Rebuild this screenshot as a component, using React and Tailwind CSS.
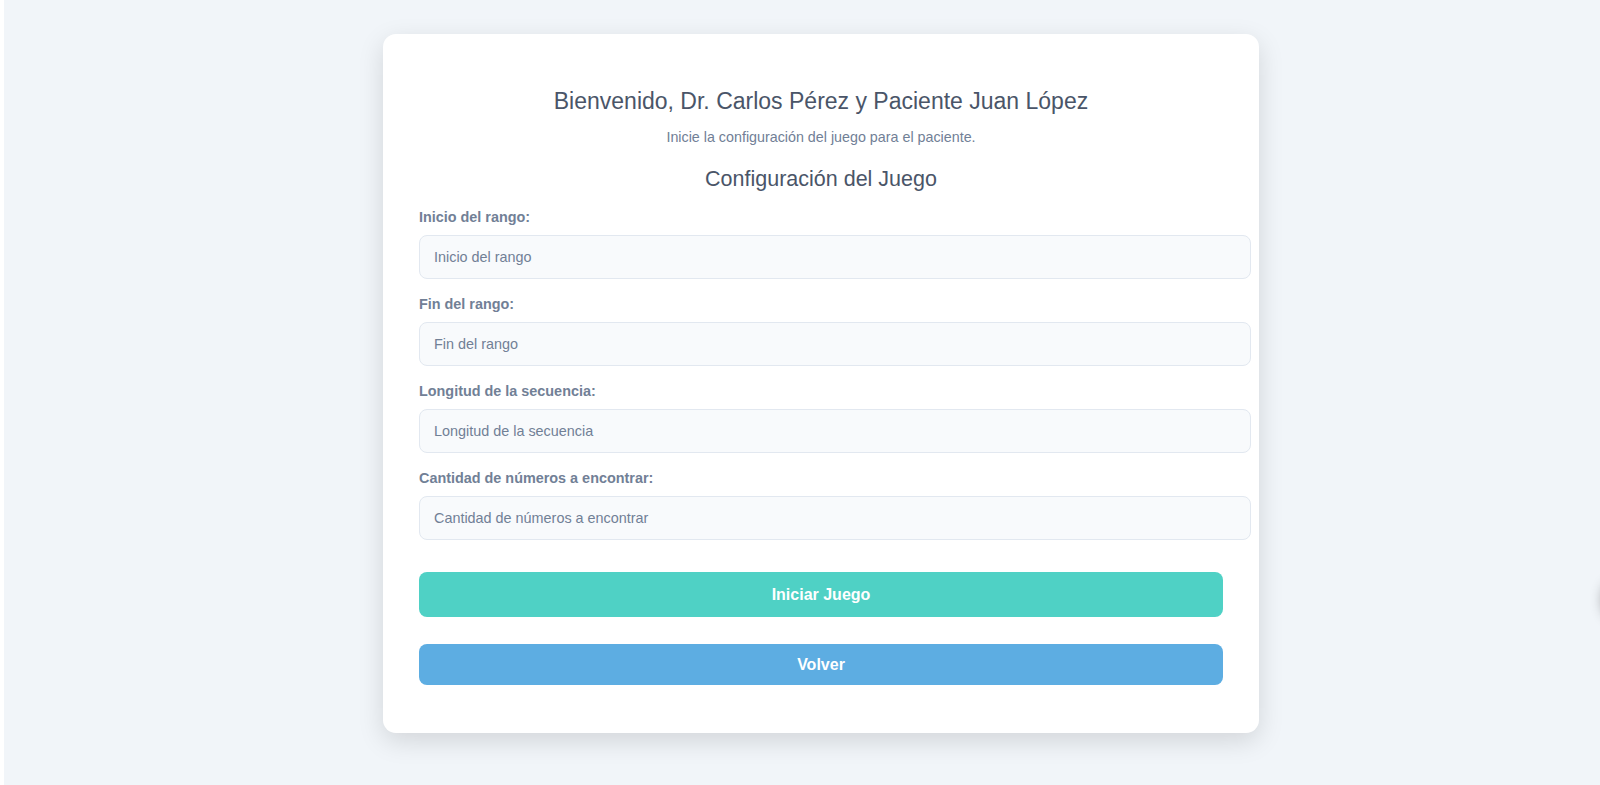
import React from "react";

const fields = [
  "Inicio del rango",
  "Fin del rango",
  "Longitud de la secuencia",
  "Cantidad de números a encontrar",
];

export default function App() {
  return (
    <div
      className="flex h-[785px] w-full overflow-hidden bg-white"
      style={{ fontFamily: '"Liberation Sans", Arial, sans-serif' }}
    >
      <div className="w-[4px] shrink-0 bg-white" />
      <div className="flex flex-1 justify-start bg-[#f1f5f9] pt-[34px] pl-[379px]">
        <div className="h-[699px] w-[876px] rounded-[13px] bg-white px-[36px] pt-[53px] shadow-[0_8px_26px_rgba(0,0,0,0.13)]">
          <h1 className="text-center text-[23px] font-normal leading-[28px] text-[#4a5568]">
            Bienvenido, Dr. Carlos Pérez y Paciente Juan López
          </h1>
          <p className="mt-[12px] text-center text-[14.3px] leading-[20px] text-[#718096]">
            Inicie la configuración del juego para el paciente.
          </p>
          <h2 className="mt-[20px] text-center text-[21.5px] font-normal leading-[24px] text-[#4a5568]">
            Configuración del Juego
          </h2>
          <div className="mt-[16px] flex flex-col gap-[15px]">
            {fields.map((f) => (
              <div key={f} className="flex flex-col">
                <label className="text-[14.4px] font-bold leading-[20px] text-[#718096]">
                  {f}:
                </label>
                <input
                  type="text"
                  placeholder={f}
                  className="mt-[8px] h-[44px] w-[832px] rounded-[8px] border border-[#e2e8f0] bg-[#f8fafc] px-[14px] text-[14.4px] text-[#4a5568] outline-none placeholder:text-[#718096]"
                />
              </div>
            ))}
          </div>
          <button className="mt-[32px] flex h-[45px] w-full items-center justify-center rounded-[8px] bg-[#4fd1c5] text-[16px] font-bold text-white">
            Iniciar Juego
          </button>
          <button className="mt-[27px] flex h-[41px] w-full items-center justify-center rounded-[8px] bg-[#5dade2] text-[16px] font-bold text-white">
            Volver
          </button>
        </div>
      </div>
      <div className="fixed left-[1604px] top-[578px] h-[44px] w-[44px] rounded-full bg-white shadow-[0_0_14px_rgba(0,0,0,0.45)]" />
    </div>
  );
}
